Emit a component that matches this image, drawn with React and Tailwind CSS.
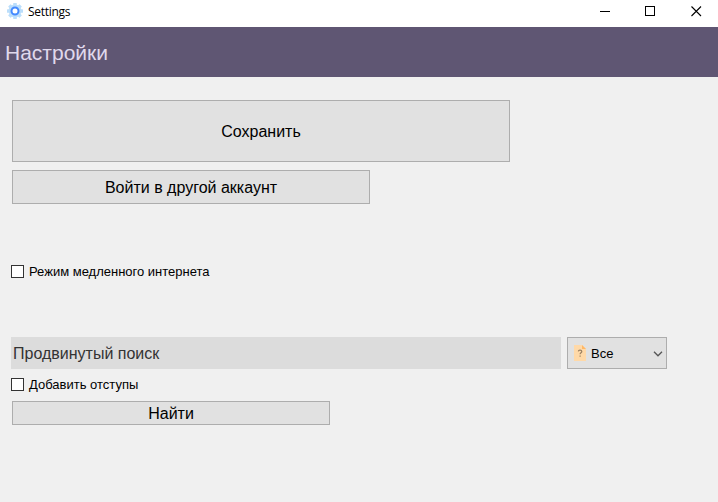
function GearIcon() {
  return (
    <svg width="16" height="16" viewBox="0 0 16 16" className="shrink-0">
      <g fill="#bbdefb">
        <circle cx="8" cy="8" r="6.4" />
        {[0, 45, 90, 135].map((angle) => (
          <rect key={angle} x="6.2" y="0" width="3.6" height="16" rx="0.5" transform={`rotate(${angle} 8 8)`} />
        ))}
      </g>
      <circle cx="8" cy="8" r="3.5" fill="#fff" stroke="#448aff" strokeWidth="2" />
    </svg>
  );
}

function TitleBar() {
  return (
    <header className="flex h-[27px] items-start bg-white pl-[7px]">
      <div className="flex h-[23px] items-center pb-px">
        <GearIcon />
        <span className="ml-[5px] pt-px font-['Open_Sans','Noto_Sans',sans-serif] text-[12px] leading-[16px] tracking-[-0.3px] text-black">
          Settings
        </span>
      </div>
      <svg width="102" height="11" viewBox="0 0 102 11" className="mt-[6px] mr-[16px] ml-auto" fill="none" stroke="#000" shapeRendering="crispEdges">
        <path d="M0 5.5H10M45.5.5h9v9h-9z" />
        <path d="M91.5.5l9.5 9.5M101 .5L91.5 10" shapeRendering="auto" strokeWidth="1.1" />
      </svg>
    </header>
  );
}

function PushButton({ className, textClassName, children }) {
  return (
    <button type="button" className={`flex items-center justify-center border border-[#adadad] bg-[#e1e1e1] text-[16px] leading-none text-black ${className}`}>
      <span className={textClassName}>{children}</span>
    </button>
  );
}

function CheckRow({ className, children }) {
  return (
    <label className={`flex h-[13px] items-center text-[13px] leading-[13px] text-black ${className}`}>
      <input type="checkbox" className="size-[13px] shrink-0 appearance-none border border-[#333] bg-white" />
      <span className="ml-[5px] whitespace-nowrap">{children}</span>
    </label>
  );
}

function FileQuestionIcon() {
  return (
    <svg width="12" height="16" viewBox="0 0 12 16" className="shrink-0">
      <path d="M0 0h8l4 4v12H0z" fill="#ffd9a8" />
      <path d="M8 0l4 4H8z" fill="#ffb866" />
      <path d="M4.3 6.3c.2-1.5 3.5-1.5 3.5.3 0 1.3-1.7 1.2-1.7 2.7M6.1 10.4v1.3" fill="none" stroke="#9c8264" strokeWidth="1.2" />
    </svg>
  );
}

export default function App() {
  return (
    <div className="h-[502px] w-[718px] overflow-hidden bg-[#f0f0f0] font-['Liberation_Sans',Arial,sans-serif]">
      <TitleBar />
      <div className="flex h-[50px] items-center bg-[#5f5673] pt-px pl-[5px]">
        <h1 className="text-[21px] leading-none text-[#e0d9ec]">Настройки</h1>
      </div>
      <main className="flex flex-col items-start pt-[23px] pl-[11px]">
        <PushButton className="ml-px h-[62px] w-[498px]" textClassName="pt-px">Сохранить</PushButton>
        <PushButton className="mt-[8px] ml-px h-[34px] w-[358px]" textClassName="pt-px">Войти в другой аккаунт</PushButton>
        <CheckRow className="mt-[61px]">Режим медленного интернета</CheckRow>
        <div className="mt-[59px] flex gap-[6px]">
          <input
            type="text"
            defaultValue="Продвинутый поиск"
            className="h-[32px] w-[550px] bg-[#dcdcdc] px-[2px] pt-px text-[16px] text-[#333]"
          />
          <button type="button" className="flex h-[32px] w-[100px] items-center border border-[#adadad] bg-[#e1e1e1] pr-[3px] pl-[6px]">
            <FileQuestionIcon />
            <span className="ml-[5px] pt-px text-[13px] leading-none text-black">Все</span>
            <svg width="10" height="6" viewBox="0 0 10 6" className="mt-px ml-auto" fill="none" stroke="#555" strokeWidth="1.3">
              <path d="M1 .8l4 4 4-4" />
            </svg>
          </button>
        </div>
        <CheckRow className="mt-[9px]">Добавить отступы</CheckRow>
        <PushButton className="mt-[10px] ml-px h-[24px] w-[318px]" textClassName="pt-px">Найти</PushButton>
      </main>
    </div>
  );
}
